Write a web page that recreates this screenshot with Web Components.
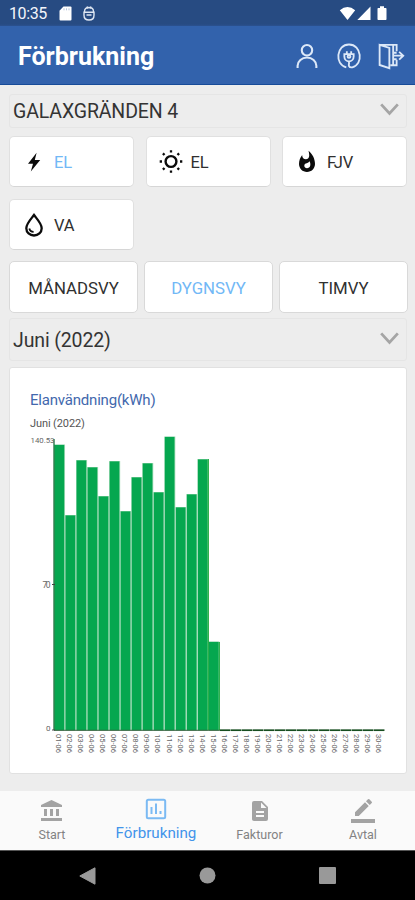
<!DOCTYPE html>
<html lang="sv">
<head>
<meta charset="utf-8">
<title>Förbrukning</title>
<style>
html,body{margin:0;padding:0}
body{width:415px;height:900px;overflow:hidden;background:#ededed;font-family:Roboto,"Liberation Sans",sans-serif;color:#2a2a2a}
</style>
</head>
<body>
<energy-app></energy-app>
<script>
const define = (name, html, setup) => customElements.define(name, class extends HTMLElement {
  constructor() {
    super();
    this.attachShadow({ mode: 'open' });
    const t = document.createElement('template');
    t.innerHTML = '<style>*{box-sizing:border-box}svg{display:block}</style>' + html;
    this.shadowRoot.append(t.content.cloneNode(true));
  }
  connectedCallback() { if (setup) setup(this, this.shadowRoot); }
});

const ICONS = {
  bolt: '<path d="M14.600 2.800 6 13.700h5L8.800 21.500 18.200 9.900h-5.400z" fill="currentColor"/>',
  sun: '<g fill="none" stroke="currentColor"><circle cx="12" cy="11.500" r="5.400" stroke-width="2.400"/><path d="M12 .2v2.300M12 20.500v2.300M.7 11.500H3M21 11.500h2.300M3.900 3.400l1.600 1.600M18.500 18l1.600 1.600M3.900 19.600 5.500 18M18.500 5l1.600-1.600" stroke-width="2.300"/></g>',
  fire: '<path d="M13.5.67s.74 2.650.74 4.800c0 2.060-1.350 3.730-3.410 3.730-2.070 0-3.630-1.670-3.630-3.730l.03-.36C5.210 7.510 4 10.620 4 14c0 4.420 3.580 8 8 8s8-3.580 8-8C20 8.610 17.410 3.800 13.500.67zM12 18.300c-1.500 0-2.700-1.100-2.700-2.500 0-1.400 1-2.200 2.400-2.500 1.200-.3 2.200-1 2.900-2 1.600 3.300.7 7-2.600 7z" fill="currentColor"/>',
  drop: '<g fill="none" stroke="currentColor"><path d="M12 2C9.500 5.500 4.300 10.500 4.300 15.200a7.700 7.300 0 0 0 15.400 0C19.700 10.500 14.500 5.500 12 2z" stroke-width="2.300"/><path d="M7.300 15.500c.5 2.200 2 3.400 4.300 3.400" stroke-width="1.800"/></g>',
  bank: '<path d="M4 10v7h3v-7zm6 0v7h3v-7zM1 22h21v-3H1zm15-12v7h3v-7zM11.500 1 1 6v2h21V6z" fill="currentColor"/>',
  chart: '<g fill="none" stroke="currentColor"><rect x="2.800" y="2.800" width="18.400" height="18.400" rx="1.500" stroke-width="2"/><path d="M7.500 10v7M12 6.500V17M16.500 14v3" stroke-width="2"/></g>',
  doc: '<path d="M14 2H6a2 2 0 0 0-2 2v16c0 1.100.89 2 1.990 2H18a2 2 0 0 0 2-2V8zm2 16H8v-2h8zm0-4H8v-2h8zm-3-5V3.500L18.500 9z" fill="currentColor"/>',
  pen: '<path d="M17.750 7 14 3.250l-10 10V17h3.750zm2.960-2.960a1 1 0 0 0 0-1.410L18.370.29a1 1 0 0 0-1.410 0L15 2.250 18.750 6zM0 20h24v4H0z" fill="currentColor"/>',
  user: '<g fill="none" stroke="currentColor" stroke-width="2"><circle cx="11.500" cy="6.500" r="5"/><path d="M2.500 23.500v-2.200a9 7.800 0 0 1 18 0v2.200"/></g>',
  plug: '<g fill="none" stroke="currentColor" stroke-width="1.700"><path d="M9.500 22.500C-1.500 20 .2 1.400 12 1.400S25.500 20 15 22.500c-3.500.4-3.500-2-2.800-4.600"/><path d="M7.700 10.300h8.600v2.200a4.300 4.500 0 0 1-8.600 0zM10 7.500v2.700M14 7.500v2.700M12 17v2"/><circle cx="12" cy="12.500" r="1.300"/></g>',
  exit: '<g fill="none" stroke="currentColor" stroke-width="1.700"><path d="M1.500 1.700h15.700v6M17.200 15.500v5h-5.700M1.500 1.700l9 2.800v18.700l-9-2.900zM14 2v18M14 9h3.200M14 15h3.200"/><path d="M14.500 11.700h8.500M19.500 8.200l3.800 3.500-3.800 3.600"/></g>',
  down: '<path d="M1.500 5.500 12 17 22.500 5.500" fill="none" stroke="currentColor" stroke-width="3.500"/>'
};

define('app-icon', '<style>:host{display:block;flex:none;width:24px;height:24px}svg{width:100%;height:100%;overflow:visible}</style><svg viewBox="0 0 24 24"></svg>',
  (el, root) => { root.querySelector('svg').innerHTML = ICONS[el.getAttribute('name')] || ''; });

define('status-bar', `<style>
:host{display:flex;height:26px;align-items:center;background:linear-gradient(#274b82 24px,#2b5290);color:#f3f6fb;padding:0 28px 0 9px;box-sizing:border-box}
span{font-size:16px;letter-spacing:-.4px;margin-right:11px;line-height:26px;padding-top:2px;width:39px}
.gap{flex:1}svg{flex:none}</style>
<span>10:35</span>
<svg width="13" height="15" viewBox="0 0 13 15"><path d="M4.500.5h7a1 1 0 0 1 1 1v12a1 1 0 0 1-1 1H1.500a1 1 0 0 1-1-1V4.800z" fill="#fff"/><path d="M5 2.300v2M7.500 2.300v2M10 2.300v2" stroke="#9aaccb" stroke-width=".7"/></svg>
<svg width="12" height="15" viewBox="0 0 12 15" style="margin-left:11px"><g fill="none" stroke="#dfe7f3" stroke-width="1.400"><path d="M1.500 5.500C1.500 2.500 3.300 1.500 6 1.500s4.500 1 4.500 4M1 6.200h10v3C11 12.500 9 14 6 14S1 12.500 1 9.200z"/><path d="M3.500 9h5M4 .5l1 2M8 .5l-1 2"/></g></svg>
<div class="gap"></div>
<svg width="48" height="15" viewBox="0 0 48 15"><path d="M.8 4.300Q8.500-2.300 16.200 4.300L8.500 14zM31.500.5V14H18.300zM41 .3h4v1.700h1.700a.8.800 0 0 1 .8.800v10.400a.8.800 0 0 1-.8.800h-7.400a.8.800 0 0 1-.8-.8V2.800a.8.800 0 0 1 .8-.8H41z" fill="#fff"/></svg>`);

define('app-header', `<style>
:host{display:flex;height:59px;align-items:center;background:#3262ac;border-bottom:1.500px solid #174b98;padding:2px 11px 0 18px;box-sizing:border-box;color:#fff}
h1{margin:0;flex:1;font-size:25px;font-weight:700;line-height:32px;letter-spacing:0;padding-top:2px;white-space:nowrap}
nav{display:flex;gap:16px;align-items:center;color:#dce8f8}
app-icon{width:26px;height:26px}app-icon[name=user]{width:25px}
</style><h1><slot></slot></h1><nav><app-icon name="user"></app-icon><app-icon name="plug"></app-icon><app-icon name="exit"></app-icon></nav>`);

define('select-field', `<style>
:host{display:flex;align-items:center;box-sizing:border-box;border:1.500px solid #e5e5e5;border-radius:3px;background:#ededed;padding:0 7px 0 3px;font-size:19.500px;letter-spacing:-.13px;color:#343434;white-space:nowrap}
span{flex:1;padding-top:1px}app-icon{width:19px;height:19px;color:#a5a5a5;margin-top:-3px}
</style><span><slot></slot></span><app-icon name="down"></app-icon>`);

define('choice-button', `<style>
:host{display:flex;align-items:center;height:51px;box-sizing:border-box;background:#fff;border:1px solid #e0e0e0;border-bottom-color:#d6d6d6;border-radius:5px;font-size:16.500px;color:#303030;white-space:nowrap}
:host([icon]){padding-left:12px;gap:8px}
:host(:not([icon])){justify-content:center;border:1.500px solid #d9d9d9;height:52px;font-size:16.800px}
:host([active]){color:#72b8f6}
span{padding-top:1px}
app-icon{color:#0b0b0b;display:none}:host([icon]) app-icon{display:block}
:host([icon]) span{letter-spacing:-.2px}
</style><app-icon></app-icon><span><slot></slot></span>`,
  (el, root) => {
    const n = el.getAttribute('icon'), i = root.querySelector('app-icon');
    if (n) { i.setAttribute('name', n); i.shadowRoot.querySelector('svg').innerHTML = ICONS[n]; } else i.remove();
  });

define('usage-chart', `<style>
:host{display:block;box-sizing:border-box;height:407px;background:#fff;border:1.500px solid #e1e1e1;border-radius:3px;padding:22px 0 0 20px;color:#555}
h2{margin:0;font-size:15px;font-weight:400;line-height:20px;color:#4268ad;letter-spacing:-.2px}
p{margin:6px 0 0;font-size:11px;line-height:15px;letter-spacing:-.1px}
svg{overflow:visible;font-family:inherit}
text{fill:#666}
</style><h2>Elanvändning(kWh)</h2><p>Juni (2022)</p><svg width="360" height="335" viewBox="0 0 360 335"></svg>`,
  (el, root) => {
    const base = 299, left = 24, step = 11.03;
    const heights = [285.5, 215, 270, 263, 234, 269, 219, 253, 267, 238, 293.5, 223, 236, 271, 88.5];
    let s = '';
    heights.forEach((h, i) => {
      const x = left + i * step;
      s += `<rect x="${x}" y="${base - h}" width="11.03" height="${h}" fill="#a6dcb9"/><rect x="${x + .5}" y="${base - h + .4}" width="9.7" height="${h}" fill="#05a74f"/>`;
    });
    for (let i = 15; i < 30; i++) s += `<path d="M${left + i * step} ${base + .2}h10.6" stroke="#174e20" stroke-width="1.7"/>`;
    s += `<path d="M${left} ${base - 291}V${base}" stroke="#08652c" stroke-width="1.2"/><path d="M${left + 165.3} ${base - 88}V${base}M${left + 154.3} ${base - 271}V${base}" stroke="#07a32b" stroke-width="1"/>`;
    s += `<path d="M${left} ${base + .3}h165.5" stroke="#35603c" stroke-width="1"/><path d="M22 ${base - 145.5}h3M22 ${base}h3" stroke="#444" stroke-width="1"/>`;
    s += `<text x="0.5" y="${base - 287}" font-size="8" textLength="24" lengthAdjust="spacingAndGlyphs">140.53</text><text x="20.5" y="${base - 142.5}" font-size="8.5" text-anchor="end" textLength="8">70</text><text x="20.5" y="${base + 1}" font-size="8" text-anchor="end">0</text>`;
    for (let i = 0; i < 30; i++) s += `<text transform="translate(${left + i * step + 2.2} ${base + 4}) rotate(90)" font-size="8" textLength="19" lengthAdjust="spacingAndGlyphs">${String(i + 1).padStart(2, '0')}-06</text>`;
    root.querySelector('svg').innerHTML = s;
  });

define('tab-item', `<style>
:host{display:flex;flex-direction:column;align-items:center;color:#a3a3a3;font-size:12.500px;white-space:nowrap;padding-top:8px;box-sizing:border-box}
span{color:#828282;line-height:18px;margin-top:3px}
:host([active]){color:#7bbaf3;font-size:15.200px;padding-top:6px}:host([active]) span{color:#4294ea;margin-top:3px}
</style><slot name="icon"></slot><span><slot></slot></span>`);

define('tab-bar', `<style>
:host{display:grid;grid-template-columns:104px 104px 103px 104px;height:59px;background:#fafafa;box-sizing:border-box}
app-icon[name=pen]{width:26px}
</style>
<tab-item><app-icon slot="icon" name="bank"></app-icon>Start</tab-item>
<tab-item active><app-icon slot="icon" name="chart"></app-icon>Förbrukning</tab-item>
<tab-item><app-icon slot="icon" name="doc"></app-icon>Fakturor</tab-item>
<tab-item><app-icon slot="icon" name="pen"></app-icon>Avtal</tab-item>`);

define('system-nav', `<style>
:host{display:flex;justify-content:space-between;height:50px;background:#000;border-top:1px solid #555;box-sizing:border-box;padding:0 79px 0 79px;align-items:center}
</style>
<svg width="17" height="18" viewBox="0 0 17 18"><path d="M.8 9 16 .8v16.400z" fill="#999" stroke="#999" stroke-linejoin="round"/></svg>
<svg width="17" height="17"><circle cx="8.500" cy="8.500" r="8" fill="#999"/></svg>
<svg width="17" height="17"><rect width="17" height="17" rx="1" fill="#999"/></svg>`);

define('energy-app', `<style>
:host{display:flex;flex-direction:column;width:415px;height:900px;background:#ededed}
main{flex:1;display:flex;flex-direction:column;padding:9px 8px 0 9px}
.sources{display:grid;grid-template-columns:repeat(3,125px);column-gap:11.500px;row-gap:12px;margin-top:8px}
.views{display:grid;grid-template-columns:repeat(3,129px);column-gap:6px;margin-top:11px}
.place{height:34px}.month{height:43px;margin:5px 0 6px}
</style>
<status-bar></status-bar>
<app-header>Förbrukning</app-header>
<main>
<select-field class="place">GALAXGRÄNDEN 4</select-field>
<section class="sources">
<choice-button icon="bolt" active>EL</choice-button>
<choice-button icon="sun">EL</choice-button>
<choice-button icon="fire">FJV</choice-button>
<choice-button icon="drop">VA</choice-button>
</section>
<section class="views">
<choice-button>MÅNADSVY</choice-button>
<choice-button active>DYGNSVY</choice-button>
<choice-button>TIMVY</choice-button>
</section>
<select-field class="month">Juni (2022)</select-field>
<usage-chart></usage-chart>
</main>
<tab-bar></tab-bar>
<system-nav></system-nav>`);
</script>
</body>
</html>
